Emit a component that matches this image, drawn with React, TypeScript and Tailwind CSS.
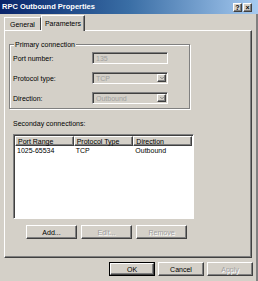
import { ChevronDown } from 'lucide-react';

const raised = 'border border-t-white border-l-white border-r-[#404040] border-b-[#404040] shadow-[inset_-1px_-1px_0_#808080]';
const sunken = 'border border-t-[#808080] border-l-[#808080] border-r-white border-b-white shadow-[inset_1px_1px_0_#404040]';

function Field({ label, value, select }: { label: string; value: string; select?: boolean }) {
  return (
    <div className="flex items-center h-[12px]">
      <span className="w-[79px] text-black">{label}</span>
      <div className={`${sunken} w-[76px] h-[12px] flex items-center bg-[#d4d0c8]`}>
        <span className="flex-1 pl-[3px] text-[#a0a0a0]">{value}</span>
        {select && (
          <div className={`${raised} w-[9px] h-[8px] mr-[1px] flex items-center justify-center`}>
            <ChevronDown className="w-[6px] h-[6px] text-[#808080]" strokeWidth={4} />
          </div>
        )}
      </div>
    </div>
  );
}

function Btn({ label, w, disabled, def }: { label: string; w: string; disabled?: boolean; def?: boolean }) {
  return (
    <div className={`${def ? 'border border-black' : ''} ${w} h-[14px] flex`}>
      <div className={`${raised} flex-1 flex items-center justify-center bg-[#d4d0c8] ${disabled ? 'text-[#a0a0a0] [text-shadow:1px_1px_0_#fff]' : 'text-black'}`}>
        {label}
      </div>
    </div>
  );
}

export default function App() {
  return (
    <div className="w-[258px] h-[281px] bg-[#d4d0c8] flex flex-col font-['Liberation_Sans',Arial,sans-serif] text-[7px] leading-none overflow-hidden">
      <div className="h-[14px] flex items-center bg-gradient-to-r from-[#0a246a] via-[#3a6ea5] to-[#a6caf0] pl-[2px] pr-[6px]">
        <span className="flex-1 text-white font-bold text-[7.5px]">RPC Outbound Properties</span>
        <div className="flex gap-[1px]">
          <div className={`${raised} w-[9px] h-[9px] bg-[#d4d0c8] flex items-center justify-center text-black font-bold text-[7px]`}>?</div>
          <div className={`${raised} w-[9px] h-[9px] bg-[#d4d0c8] flex items-center justify-center text-black font-bold text-[7px]`}>×</div>
        </div>
      </div>

      <div className="flex-1 flex flex-col border-r-2 border-r-[#808080]">
        <div className="flex items-end pl-[4px] h-[16px]">
          <div className="h-[13px] px-[5px] flex items-center border-t border-l border-r border-t-white border-l-white border-r-[#404040] text-black">
            General
          </div>
          <div className="relative z-10 -mb-[1px] h-[16px] px-[3px] flex items-center bg-[#d4d0c8] border-t border-l border-r border-t-white border-l-white border-r-[#404040] shadow-[inset_-1px_0_0_#808080] text-black">
            Parameters
          </div>
        </div>

        <div className="mx-[4px] h-[228px] border border-t-white border-l-white border-r-[#404040] border-b-[#404040] shadow-[inset_-1px_-1px_0_#808080] flex flex-col">
          <div className="relative ml-[4px] mt-[13px] w-[181px] h-[65px] border border-[#808080] shadow-[inset_1px_1px_0_#fff,1px_1px_0_#fff] flex flex-col gap-[8px] pt-[7px] pl-[3px]">
            <span className="absolute -top-[4px] left-[4px] px-[1px] bg-[#d4d0c8] text-black">Primary connection</span>
            <Field label="Port number:" value="135" />
            <Field label="Protocol type:" value="TCP" select />
            <Field label="Direction:" value="Outbound" select />
          </div>

          <span className="ml-[8px] mt-[11px] text-black">Seconday connections:</span>

          <div className={`${sunken} ml-[8px] mt-[7px] w-[181px] h-[85px] bg-white flex flex-col p-[1px]`}>
            <div className="flex h-[10px]">
              <div className={`${raised} w-[59px] pl-[2px] flex items-center bg-[#d4d0c8] text-black`}>Port Range</div>
              <div className={`${raised} w-[60px] pl-[2px] flex items-center bg-[#d4d0c8] text-black`}>Protocol Type</div>
              <div className={`${raised} w-[59px] pl-[2px] flex items-center bg-[#d4d0c8] text-black`}>Direction</div>
            </div>
            <div className="flex h-[9px] items-center text-black">
              <span className="w-[59px] pl-[2px]">1025-65534</span>
              <span className="w-[60px] pl-[2px]">TCP</span>
              <span className="w-[59px] pl-[2px]">Outbound</span>
            </div>
          </div>

          <div className="flex gap-[4px] ml-[21px] mt-[6px]">
            <Btn label="Add..." w="w-[51px]" />
            <Btn label="Edit..." w="w-[51px]" disabled />
            <Btn label="Remove" w="w-[51px]" disabled />
          </div>
        </div>

        <div className="flex gap-[3px] justify-end pr-[3px] mt-[4px]">
          <Btn label="OK" w="w-[46px]" def />
          <Btn label="Cancel" w="w-[46px]" />
          <Btn label="Apply" w="w-[46px]" disabled />
        </div>
      </div>
    </div>
  );
}
